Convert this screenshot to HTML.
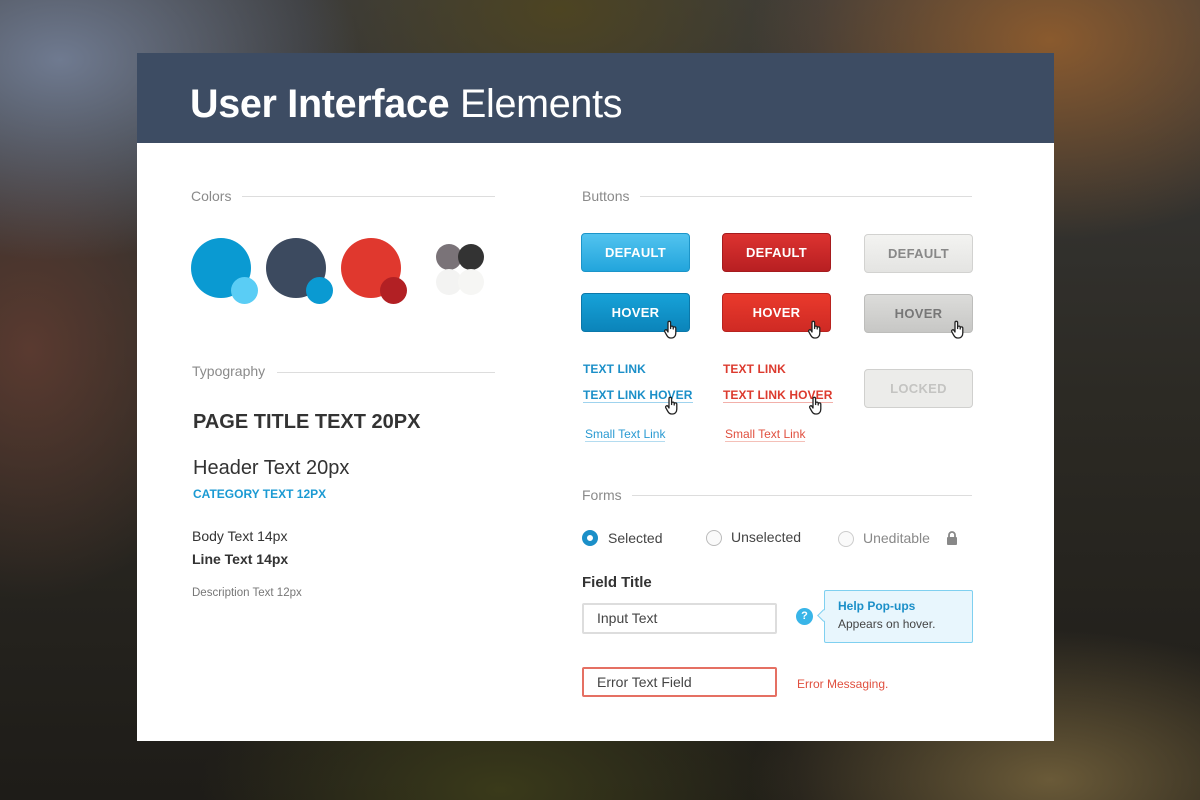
<!DOCTYPE html>
<html><head><meta charset="utf-8"><style>
*{margin:0;padding:0;box-sizing:border-box}
body{width:1200px;height:800px;overflow:hidden;position:relative;font-family:"Liberation Sans",sans-serif;
background:
radial-gradient(ellipse 300px 200px at 60px 60px,#6f7a90 0%,rgba(111,122,144,0) 100%),
radial-gradient(ellipse 300px 200px at 1050px 40px,#8a5a2e 0%,rgba(138,90,46,0) 100%),
radial-gradient(ellipse 260px 160px at 560px 10px,#4d4422 0%,rgba(77,68,34,0) 100%),
radial-gradient(ellipse 300px 150px at 1050px 780px,#6a5a38 0%,rgba(106,90,56,0) 100%),
radial-gradient(ellipse 300px 150px at 500px 790px,#3a3a1a 0%,rgba(58,58,26,0) 100%),
radial-gradient(ellipse 200px 250px at 30px 350px,#5a3a30 0%,rgba(90,58,48,0) 100%),
linear-gradient(180deg,#3a3a3a 0%,#2c2a24 50%,#1e1c18 100%);}
.a{position:absolute}
.card{left:137px;top:53px;width:917px;height:688px;background:#fff}
.hdr{left:137px;top:53px;width:917px;height:90px;background:#3d4c63}
.title{left:190px;top:82px;font-size:39.5px;color:#fff;letter-spacing:-.3px}
.sec{font-size:14px;color:#8a8a8a}
.line{height:1px;background:#ddd}
.c{position:absolute;border-radius:50%}
.btn{position:absolute;width:109px;height:39px;border-radius:4px;font-weight:bold;font-size:13px;color:#fff;text-align:center;line-height:38px;letter-spacing:.3px}
.hand{position:absolute;width:16px;height:19px}
.lk{position:absolute;font-size:12px;font-weight:bold;letter-spacing:.1px}
.radio{position:absolute;width:16px;height:16px;border-radius:50%;border:1px solid #bbb;background:#fafafa}
</style></head><body>
<svg width="0" height="0" style="position:absolute"><defs><symbol id="h" viewBox="0 0 16 19"><path d="M5 10V2.6a1.3 1.3 0 0 1 2.6 0V8.5V7.4a1.3 1.3 0 0 1 2.6 0V9V8.2a1.3 1.3 0 0 1 2.6 0V13c0 3-1.8 5-4.3 5H7.6c-1.8 0-2.8-.9-3.7-2.5L1.8 11.8a1.3 1.3 0 0 1 2.2-1.4L5 12z" fill="#fff" stroke="#222" stroke-width="1.3" stroke-linejoin="round"/></symbol></defs></svg>
<div class="a card"></div>
<div class="a hdr"></div>
<div class="a title"><b>User Interface</b> Elements</div>

<div class="a sec" style="left:191px;top:188px">Colors</div>
<div class="a line" style="left:242px;top:196px;width:253px"></div>
<div class="c" style="left:191px;top:238px;width:60px;height:60px;background:#0a9ad2"></div>
<div class="c" style="left:231px;top:277px;width:27px;height:27px;background:#5acdf5"></div>
<div class="c" style="left:266px;top:238px;width:60px;height:60px;background:#3c4a5f"></div>
<div class="c" style="left:306px;top:277px;width:27px;height:27px;background:#0a9ad2"></div>
<div class="c" style="left:341px;top:238px;width:60px;height:60px;background:#e0382e"></div>
<div class="c" style="left:380px;top:277px;width:27px;height:27px;background:#b22024"></div>
<div class="c" style="left:436px;top:244px;width:26px;height:26px;background:#7a7378"></div>
<div class="c" style="left:458px;top:244px;width:26px;height:26px;background:#333"></div>
<div class="c" style="left:436px;top:269px;width:26px;height:26px;background:#f3f3f2"></div>
<div class="c" style="left:458px;top:269px;width:26px;height:26px;background:#f6f6f4"></div>

<div class="a sec" style="left:192px;top:363px">Typography</div>
<div class="a line" style="left:277px;top:372px;width:218px"></div>
<div class="a" style="left:193px;top:411px;font-size:20px;font-weight:bold;color:#333">PAGE TITLE TEXT 20PX</div>
<div class="a" style="left:193px;top:457px;font-size:20px;color:#333">Header Text 20px</div>
<div class="a" style="left:193px;top:487px;font-size:12px;font-weight:bold;color:#1b9ad3">CATEGORY TEXT 12PX</div>
<div class="a" style="left:192px;top:528px;font-size:14px;color:#333">Body Text 14px</div>
<div class="a" style="left:192px;top:551px;font-size:14px;font-weight:bold;color:#333">Line Text 14px</div>
<div class="a" style="left:192px;top:587px;font-size:11.5px;color:#777">Description Text 12px</div>

<div class="a sec" style="left:582px;top:188px">Buttons</div>
<div class="a line" style="left:640px;top:196px;width:332px"></div>
<div class="btn" style="left:581px;top:233px;background:linear-gradient(#52c3ef,#22a5dc);border:1px solid #1c95c9">DEFAULT</div>
<div class="btn" style="left:722px;top:233px;background:linear-gradient(#dd3330,#b81f22);border:1px solid #a51b1e">DEFAULT</div>
<div class="btn" style="left:864px;top:234px;background:linear-gradient(#f3f3f1,#e4e4e2);border:1px solid #d2d2d0;color:#888">DEFAULT</div>
<div class="btn" style="left:581px;top:293px;background:linear-gradient(#17a2d8,#0b84ba);border:1px solid #0a78aa">HOVER</div>
<div class="btn" style="left:722px;top:293px;background:linear-gradient(#ea3a2c,#cf2a24);border:1px solid #b8231f">HOVER</div>
<div class="btn" style="left:864px;top:294px;background:linear-gradient(#dcdcda,#c7c7c5);border:1px solid #bdbdbb;color:#777">HOVER</div>
<div class="btn" style="left:864px;top:369px;background:#ececea;border:1px solid #d0d0ce;color:#c4c4c2">LOCKED</div>
<svg class="hand" style="left:663px;top:320px"><use href="#h"/></svg>
<svg class="hand" style="left:807px;top:320px"><use href="#h"/></svg>
<svg class="hand" style="left:950px;top:320px"><use href="#h"/></svg>

<div class="lk" style="left:583px;top:362px;color:#1b8fc8">TEXT LINK</div>
<div class="lk" style="left:583px;top:388px;color:#1b8fc8;border-bottom:1px solid #9fd3ee">TEXT LINK HOVER</div>
<div class="a" style="left:585px;top:427px;font-size:12px;color:#2a9ad2;border-bottom:1px solid #b4dcf0">Small Text Link</div>
<div class="lk" style="left:723px;top:362px;color:#dc3a2e">TEXT LINK</div>
<div class="lk" style="left:723px;top:388px;color:#dc3a2e;border-bottom:1px solid #f2b0aa">TEXT LINK HOVER</div>
<div class="a" style="left:725px;top:427px;font-size:12px;color:#e0503f;border-bottom:1px solid #f4c0b8">Small Text Link</div>
<svg class="hand" style="left:664px;top:396px"><use href="#h"/></svg>
<svg class="hand" style="left:808px;top:396px"><use href="#h"/></svg>

<div class="a sec" style="left:582px;top:487px">Forms</div>
<div class="a line" style="left:632px;top:495px;width:340px"></div>
<div class="radio" style="left:582px;top:530px;border:5px solid #1b8fc8;background:#fff"></div>
<div class="a" style="left:608px;top:530px;font-size:14px;color:#444">Selected</div>
<div class="radio" style="left:706px;top:530px"></div>
<div class="a" style="left:731px;top:529px;font-size:14px;color:#444">Unselected</div>
<div class="radio" style="left:838px;top:531px;border-color:#ccc"></div>
<div class="a" style="left:863px;top:530px;font-size:14px;color:#888">Uneditable</div>
<svg class="a" style="left:946px;top:531px" width="12" height="14" viewBox="0 0 12 14"><path d="M3 6V4a3 3 0 0 1 6 0v2" stroke="#888" stroke-width="1.8" fill="none"/><rect x="1" y="6" width="10" height="8" rx="1" fill="#888"/></svg>

<div class="a" style="left:582px;top:574px;font-size:15px;font-weight:bold;color:#333">Field Title</div>
<div class="a" style="left:582px;top:603px;width:195px;height:31px;border:2px solid #ddd;border-radius:2px;font-size:14px;color:#444;padding:5px 0 0 13px">Input Text</div>
<div class="c" style="left:796px;top:608px;width:17px;height:17px;background:#39b5e8;color:#fff;font-size:11px;font-weight:bold;text-align:center;line-height:17px">?</div>
<div class="a" style="left:824px;top:590px;width:149px;height:53px;background:#e8f6fd;border:1px solid #7fd0f0;border-radius:2px"></div>
<div class="a" style="left:819px;top:611px;width:9px;height:9px;background:#e8f6fd;border-left:1px solid #7fd0f0;border-bottom:1px solid #7fd0f0;transform:rotate(45deg)"></div>
<div class="a" style="left:838px;top:599px;font-size:12px;font-weight:bold;color:#1b8fc8">Help Pop-ups</div>
<div class="a" style="left:838px;top:617px;font-size:12px;color:#444">Appears on hover.</div>

<div class="a" style="left:582px;top:667px;width:195px;height:30px;border:2px solid #e57063;border-radius:2px;font-size:14px;color:#444;padding:5px 0 0 13px">Error Text Field</div>
<div class="a" style="left:797px;top:677px;font-size:12px;color:#e0503f">Error Messaging.</div>
</body></html>
